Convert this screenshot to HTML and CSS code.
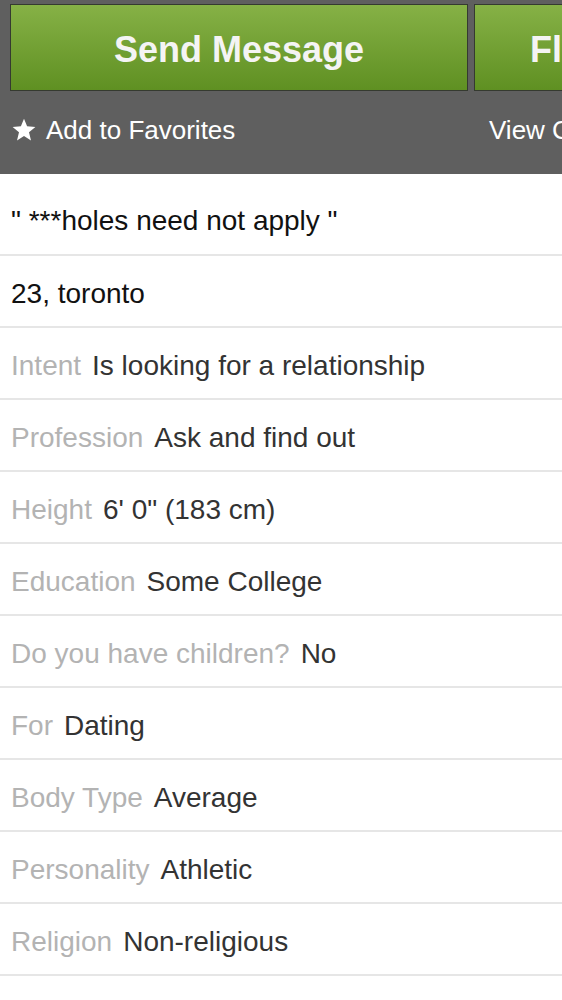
FILE: index.html
```html
<!DOCTYPE html>
<html>
<head>
<meta charset="utf-8">
<link rel="stylesheet" href="styles.css">
</head>
<body>
<div class="page">
  <header class="actions">
    <div class="buttons">
      <div class="btn btn-send">Send Message</div>
      <div class="btn btn-flirt">Flirt</div>
    </div>
    <div class="links">
      <div class="link link-fav">
        <svg class="star" viewBox="0 0 24 24" width="24" height="24"><path d="M12 0.8 L15.1 8.3 L23.4 8.9 L17 14.2 L19 22.4 L12 17.9 L5 22.4 L7 14.2 L0.6 8.9 L8.9 8.3 Z" fill="#fff"/></svg>
        <span>Add to Favorites</span>
      </div>
      <div class="link link-view"><span>View Comments</span></div>
    </div>
  </header>
  <ul class="details">
    <li class="row row-quote"><span class="plain">" ***holes need not apply "</span></li>
    <li class="row"><span class="plain">23, toronto</span></li>
    <li class="row"><span class="label">Intent</span><span class="value">Is looking for a relationship</span></li>
    <li class="row"><span class="label">Profession</span><span class="value">Ask and find out</span></li>
    <li class="row"><span class="label">Height</span><span class="value">6' 0" (183 cm)</span></li>
    <li class="row"><span class="label">Education</span><span class="value">Some College</span></li>
    <li class="row"><span class="label">Do you have children?</span><span class="value">No</span></li>
    <li class="row"><span class="label">For</span><span class="value">Dating</span></li>
    <li class="row"><span class="label">Body Type</span><span class="value">Average</span></li>
    <li class="row"><span class="label">Personality</span><span class="value">Athletic</span></li>
    <li class="row"><span class="label">Religion</span><span class="value">Non-religious</span></li>
  </ul>
</div>
</body>
</html>
```

FILE: styles.css
```css
html, body {
  margin: 0;
  padding: 0;
  background: #ffffff;
}
body {
  width: 562px;
  height: 1000px;
  overflow: hidden;
  font-family: "Liberation Sans", Arial, sans-serif;
}
.page {
  width: 562px;
  overflow: hidden;
}
.actions {
  background: #5f5f5f;
  height: 174px;
  padding: 4px 0 0 10px;
  box-sizing: border-box;
  overflow: hidden;
}
.buttons {
  display: flex;
  gap: 6px;
}
.btn {
  height: 87px;
  box-sizing: border-box;
  border: 1px solid #353a30;
  background: linear-gradient(#86b146, #5f9022);
  color: #f4f4f4;
  font-weight: bold;
  font-size: 36px;
  display: flex;
  align-items: center;
  padding-top: 4px;
}
.btn-send {
  flex: 0 0 458px;
  justify-content: center;
}
.btn-flirt {
  flex: 0 0 300px;
  justify-content: flex-start;
  padding-left: 55px;
}
.links {
  display: flex;
  height: 83px;
  align-items: center;
  padding-bottom: 5px;
  box-sizing: border-box;
}
.link {
  display: flex;
  align-items: center;
  color: #ffffff;
  font-size: 26px;
  white-space: nowrap;
}
.link-fav {
  flex: 0 0 464px;
  padding-left: 2px;
  gap: 10px;
}
.link-view {
  flex: 0 0 300px;
  padding-left: 13px;
}
.star {
  display: block;
}
.details {
  list-style: none;
  margin: 0;
  padding: 0;
}
.row {
  display: flex;
  align-items: center;
  gap: 11px;
  height: 72px;
  box-sizing: border-box;
  padding: 5px 11px 0;
  border-bottom: 2px solid #e6e6e6;
  font-size: 28px;
  white-space: nowrap;
}
.row-quote {
  height: 82px;
  padding-top: 13px;
}
.plain {
  color: #111111;
}
.label {
  color: #b3b3b3;
}
.value {
  color: #333333;
}
```
